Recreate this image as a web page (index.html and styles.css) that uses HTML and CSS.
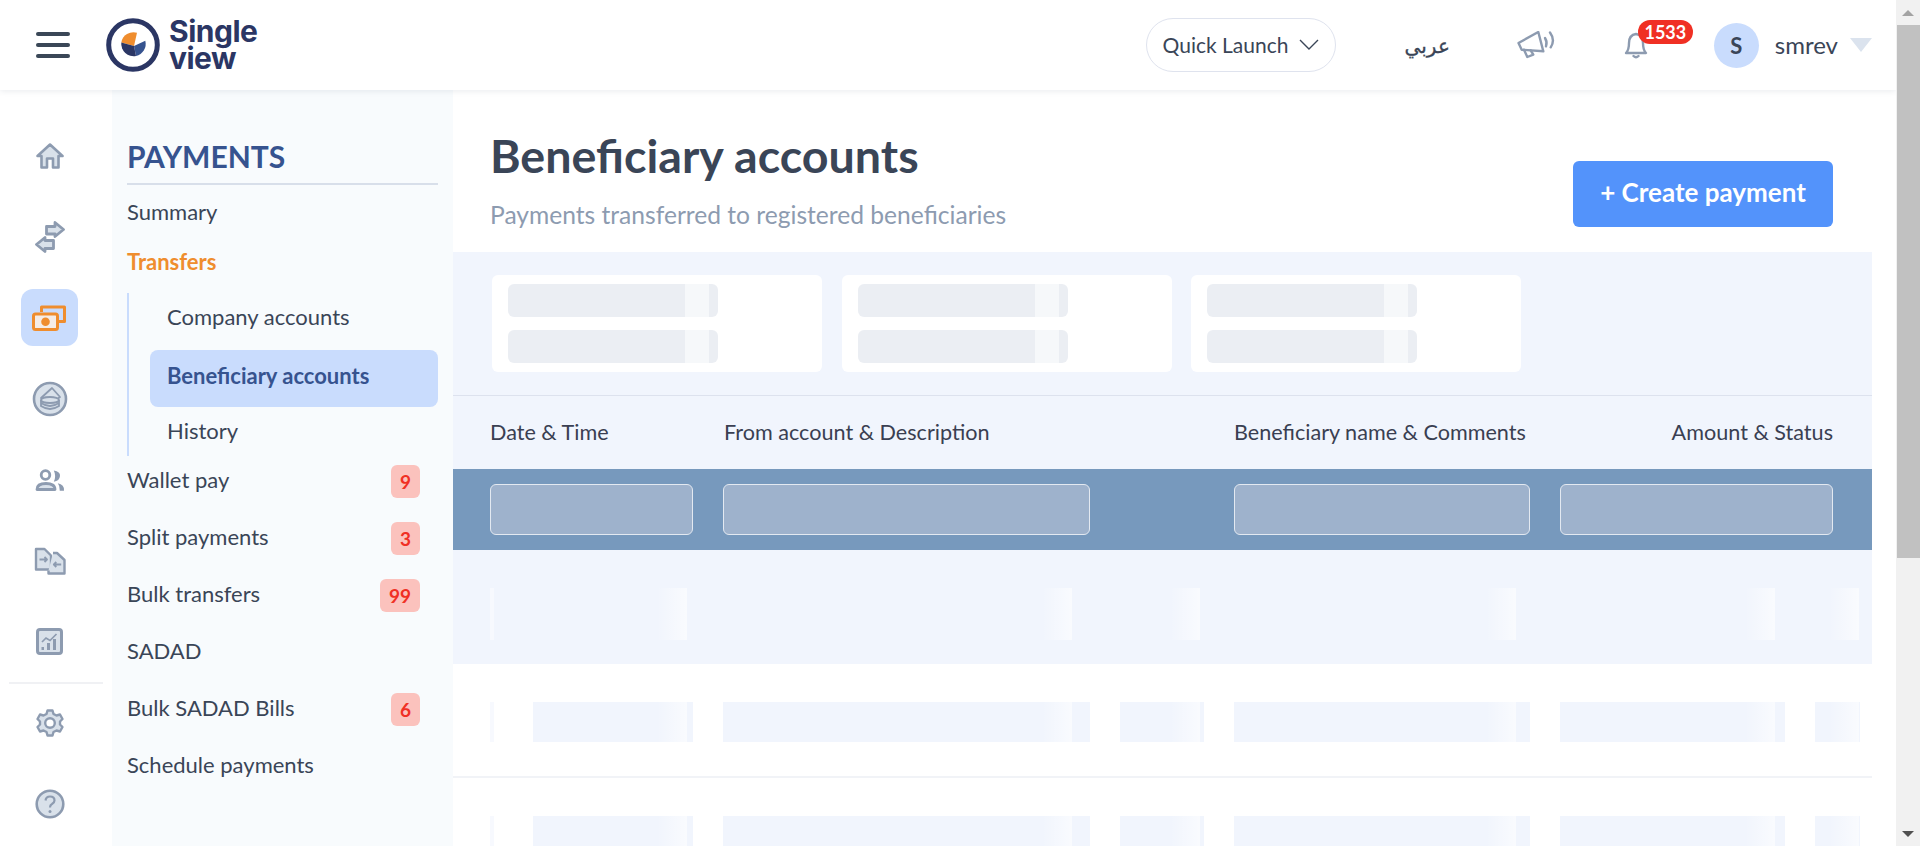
FILE: index.html
```html
<!DOCTYPE html>
<html lang="en">
<head>
  <meta charset="UTF-8" />
  <meta name="viewport" content="width=device-width, initial-scale=1.0"/>
  <title>Beneficiary accounts</title>
  <link rel="stylesheet" href="styles.css">
</head>
<body>

  <div class="page">
    <header class="topbar">
      <div class="burger"><span></span><span></span><span></span></div>
      <div class="logo">
        <svg width="54" height="54" viewBox="0 0 54 54">
          <circle cx="27" cy="27" r="24.300" fill="none" stroke="#2b3664" stroke-width="5"/>
          <path d="M15.300 24.500 A12.500 12.500 0 0 1 31 14.700 L28 28 Z" fill="#ef8d2e"/>
          <path d="M28 28 L39.300 22.700 A12.500 12.500 0 0 1 30 38 Z" fill="#36538f"/>
          <path d="M15.300 24.500 L28 28 L30 38 A12.500 12.500 0 0 1 15.300 24.500 Z" fill="#2b3664"/>
        </svg>
        <div class="logo-text">Single<br>view</div>
      </div>

      <div class="top-right">
        <button class="quick">Quick Launch
          <svg width="20" height="11" viewBox="0 0 20 11"><path d="M1 1 L10 10 L19 1" fill="none" stroke="#3a4557" stroke-width="1.400"/></svg>
        </button>
        <span class="lang" lang="ar">عربي</span>
        <svg class="megaphone" width="38" height="28" viewBox="0 0 38 28" fill="none" stroke="#8d9bb0" stroke-width="2.400" stroke-linejoin="round" stroke-linecap="round">
          <path d="M1.500 12 L21.300 1 L26.300 20.300 L4.700 18.700 Z"/>
          <path d="M7 18.700 L10.300 26 L16.300 23.700 L13.700 19.300"/>
          <path d="M28 7 Q30.500 11 29 15.300"/>
          <path d="M33 1.500 Q38.500 9 33.700 16.300"/>
        </svg>
        <div class="bell-wrap">
          <svg width="24" height="28" viewBox="0 0 24 28" fill="none" stroke="#8d9bb0" stroke-width="2.400" stroke-linejoin="round" stroke-linecap="round">
            <path d="M2 22 Q5 19 5 12 Q5 4 12 3 Q19 4 19 12 Q19 19 22 22 Z"/>
            <path d="M9.500 25 Q12 27.500 14.500 25"/>
          </svg>
          <span class="count">1533</span>
        </div>
        <div class="avatar">S</div>
        <span class="username">smrev</span>
        <span class="caret"></span>
      </div>
    </header>

    <div class="shell">
      <nav class="rail">
        <a class="rail-item">
          <svg width="28" height="26" viewBox="0 0 28 26"><path d="M14 1.500 L26.500 13 H22.500 V24.500 H17 V15.500 H11 V24.500 H5.500 V13 H1.500 Z" fill="#d9e1ea" stroke="#8d9bb0" stroke-width="2.600" stroke-linejoin="round"/></svg>
        </a>
        <a class="rail-item">
          <svg width="30" height="32" viewBox="0 0 30 32" fill="#d9e1ea" stroke="#8d9bb0" stroke-width="2.800" stroke-linejoin="round"><path d="M11.500 5.500 H20 V1.500 L28.500 8.500 L20 15.500 V13 H11.500 Z"/><path d="M1.500 23.500 L10 16.500 V19.500 H18.500 V27.500 H10 V30.500 Z"/></svg>
        </a>
        <a class="rail-item active">
          <svg width="35" height="26" viewBox="0 0 35 26" fill="none" stroke="#ef8d2e" stroke-width="3" stroke-linejoin="round"><path d="M9.500 7 V2 H32.500 V16.500 H27"/><rect x="1.500" y="9" width="24" height="15.500" rx="2" fill="#f5ece6"/><circle cx="13.500" cy="16.700" r="4.300" fill="#ef8d2e" stroke="none"/></svg>
        </a>
        <a class="rail-item">
          <svg width="36" height="36" viewBox="0 0 36 36"><circle cx="18" cy="18" r="16" fill="#d9e1ea" stroke="#8d9bb0" stroke-width="2.600"/><path d="M9 17 L20 7 L28 16 L21 21 Z" fill="#d9e1ea" stroke="#8d9bb0" stroke-width="1.800" stroke-linejoin="round"/><ellipse cx="18" cy="19" rx="9" ry="3" fill="#d9e1ea" stroke="#8d9bb0" stroke-width="1.800"/><path d="M9 19 V25 Q18 31 27 25 V19 M9 22 Q18 28 27 22" fill="none" stroke="#8d9bb0" stroke-width="1.800"/></svg>
        </a>
        <a class="rail-item">
          <svg width="30" height="24" viewBox="0 0 30 24"><circle cx="10.500" cy="7" r="4.300" fill="#fff" stroke="#8d9bb0" stroke-width="2.800"/><path d="M2 21.500 Q2 15.500 11 15.500 Q20 15.500 20 21.500 Z" fill="#d9e1ea" stroke="#8d9bb0" stroke-width="2.800" stroke-linejoin="round"/><path d="M18.800 2.500 Q25.500 3.500 25 8 Q24.500 13 18.800 13.700 Q21.500 8 18.800 2.500 Z" fill="#8d9bb0"/><path d="M22.800 15.300 Q29.500 16.500 29 22.700 H24.800 Q25 18 22.800 15.300 Z" fill="#8d9bb0"/></svg>
        </a>
        <a class="rail-item">
          <svg width="32" height="28" viewBox="0 0 32 28" fill="none" stroke="#8d9bb0" stroke-width="2.400" stroke-linejoin="round"><path d="M2 2 H10.500 L17 8.500 V22.500 H2 Z" fill="#d9e1ea"/><path d="M19 6 H23 L30.500 13 V26.500 H14.500 V23.500" fill="#d9e1ea"/><path d="M5.500 12.500 H13 M10.500 10 L13 12.500 L10.500 15 M27.200 17.500 H19.800 M22.300 15 L19.800 17.500 L22.300 20" stroke-width="1.800"/></svg>
        </a>
        <a class="rail-item">
          <svg width="27" height="27" viewBox="0 0 27 27"><rect x="1.500" y="1.500" width="24" height="24" rx="2.500" fill="#d9e1ea" stroke="#8d9bb0" stroke-width="3"/><path d="M6 14 L10 10 L14 12.500 L20.500 6" fill="none" stroke="#8d9bb0" stroke-width="1.700"/><path d="M5.500 19 H8 V22 H5.500 Z M11 15 H14 V22 H11 Z M17 11 H20 V22 H17 Z" fill="#8d9bb0"/></svg>
        </a>
        <div class="rail-sep"></div>
        <a class="rail-item">
          <svg width="28" height="28" viewBox="0 0 28 28"><path d="M11.500 1.500 H16.500 L17.500 5 L20.500 6.500 L24 5.500 L26.500 10 L24 12.500 V15.500 L26.500 18 L24 22.500 L20.500 21.500 L17.500 23 L16.500 26.500 H11.500 L10.500 23 L7.500 21.500 L4 22.500 L1.500 18 L4 15.500 V12.500 L1.500 10 L4 5.500 L7.500 6.500 L10.500 5 Z" fill="#d9e1ea" stroke="#8d9bb0" stroke-width="2.400" stroke-linejoin="round"/><circle cx="14" cy="14" r="4.800" fill="#fff" stroke="#8d9bb0" stroke-width="2.400"/></svg>
        </a>
        <a class="rail-item">
          <svg width="30" height="30" viewBox="0 0 30 30"><circle cx="15" cy="15" r="13.300" fill="#d9e1ea" stroke="#8d9bb0" stroke-width="2.600"/><path d="M10.500 11.500 Q11 7.500 15 7.500 Q19.500 7.500 19.500 11.500 Q19.500 13.500 17 15 Q15 16 15 18.500" fill="none" stroke="#8d9bb0" stroke-width="2.200"/><circle cx="15" cy="22.500" r="1.500" fill="#8d9bb0"/></svg>
        </a>
      </nav>

      <aside class="panel">
        <h2 class="panel-title">PAYMENTS</h2>
        <a class="menu-item">Summary</a>
        <a class="menu-item current">Transfers</a>
        <div class="submenu">
          <a class="sub-item">Company accounts</a>
          <a class="sub-item selected">Beneficiary accounts</a>
          <a class="sub-item">History</a>
        </div>
        <a class="menu-item">Wallet pay <span class="tag">9</span></a>
        <a class="menu-item">Split payments <span class="tag">3</span></a>
        <a class="menu-item">Bulk transfers <span class="tag">99</span></a>
        <a class="menu-item">SADAD</a>
        <a class="menu-item">Bulk SADAD Bills <span class="tag">6</span></a>
        <a class="menu-item">Schedule payments</a>
      </aside>

      <main class="main">
        <div class="head">
          <div>
            <h1>Beneficiary accounts</h1>
            <p>Payments transferred to registered beneficiaries</p>
          </div>
          <button class="create">+ Create payment</button>
        </div>

        <div class="cards">
          <div class="card"><div class="skel"></div><div class="skel"></div></div>
          <div class="card"><div class="skel"></div><div class="skel"></div></div>
          <div class="card"><div class="skel"></div><div class="skel"></div></div>
        </div>

        <div class="table-head">
          <span class="col-date">Date &amp; Time</span>
          <span class="col-from">From account &amp; Description</span>
          <span class="col-name">Beneficiary name &amp; Comments</span>
          <span class="col-amount">Amount &amp; Status</span>
        </div>

        <div class="filters">
          <div class="filter f-date"></div>
          <div class="filter f-from"></div>
          <div class="filter f-name"></div>
          <div class="filter f-amount"></div>
        </div>

        <div class="row row-first">
          <i class="bar b-thin"></i><i class="bar b-a"></i><i class="bar b-b"></i><i class="bar b-c"></i><i class="bar b-d"></i><i class="bar b-e"></i><i class="bar b-f"></i>
        </div>
        <div class="row">
          <i class="bar b-thin"></i><i class="bar b-a"></i><i class="bar b-b"></i><i class="bar b-c"></i><i class="bar b-d"></i><i class="bar b-e"></i><i class="bar b-f"></i>
        </div>
        <div class="row">
          <i class="bar b-thin"></i><i class="bar b-a"></i><i class="bar b-b"></i><i class="bar b-c"></i><i class="bar b-d"></i><i class="bar b-e"></i><i class="bar b-f"></i>
        </div>
      </main>
    </div>
  </div>

  <div class="scrollbar">
    <div class="arrow-up"></div>
    <div class="thumb"></div>
    <div class="arrow-down"></div>
  </div>

</body>
</html>
```

FILE: styles.css
```css
* {
  box-sizing: border-box;
}
body {
  margin: 0;
  height: 846px;
  overflow: hidden;
  display: flex;
  background: #fff;
  font-family: Lato, "Noto Sans", sans-serif;
  color: #3a4557;
}
.page {
  width: 1896px;
  height: 846px;
  overflow: hidden;
}

/* top bar */
.topbar {
  height: 90px;
  display: flex;
  align-items: center;
  padding-left: 36px;
  background: #fff;
  box-shadow: 0 1px 6px rgba(40, 60, 90, 0.1);
  position: relative;
}
.burger {
  width: 34px;
  display: flex;
  flex-direction: column;
  gap: 7px;
}
.burger span {
  height: 4px;
  background: #3a4757;
  border-radius: 2px;
}
.logo {
  margin-left: 36px;
  display: flex;
  align-items: center;
  gap: 9px;
}
.logo-text {
  font-family: Inter, sans-serif;
  font-size: 30px;
  font-weight: 700;
  line-height: 27px;
  letter-spacing: -0.5px;
  color: #2b3664;
}
.top-right {
  margin-left: auto;
  display: flex;
  align-items: center;
}
.quick {
  width: 190px;
  height: 54px;
  padding: 0 16px 2px;
  display: flex;
  align-items: center;
  justify-content: space-between;
  background: #fff;
  border: 1px solid #dfe3ee;
  border-radius: 27px;
  font: 21px Lato, sans-serif;
  color: #3a4557;
}
.lang {
  margin-left: 69px;
  font: 20px "Noto Sans", "DejaVu Sans", sans-serif;
  -webkit-text-stroke: 0.3px #3a4557;
  color: #3a4557;
}
.megaphone {
  margin-left: 67px;
}
.bell-wrap {
  margin-left: 69px;
  width: 69px;
  height: 54px;
  display: flex;
  align-items: center;
  position: relative;
}
.count {
  position: absolute;
  left: 14px;
  top: 2px;
  width: 55px;
  height: 24px;
  background: #f03024;
  border-radius: 12px;
  color: #fff;
  font-size: 18px;
  font-weight: 700;
  line-height: 24px;
  text-align: center;
}
.avatar {
  margin-left: 21px;
  width: 45px;
  height: 45px;
  border-radius: 50%;
  background: #c9dcfd;
  text-align: center;
  font-size: 22px;
  font-weight: 700;
  line-height: 45px;
}
.username {
  margin-left: 16px;
  padding-bottom: 2px;
  font-size: 24px;
}
.caret {
  margin-left: 12px;
  margin-right: 24px;
  border-left: 11px solid transparent;
  border-right: 11px solid transparent;
  border-top: 14px solid #dbe3ee;
}

/* left columns */
.shell {
  display: flex;
  height: 756px;
}
.rail {
  width: 112px;
  padding-top: 37px;
  display: flex;
  flex-direction: column;
  align-items: flex-start;
}
.rail-item {
  width: 57px;
  height: 57px;
  margin: 0 0 24px 21px;
  flex-shrink: 0;
  display: flex;
  align-items: center;
  justify-content: center;
  border-radius: 12px;
}
.rail-item.active {
  background: #c9dcfd;
}
.rail-sep {
  width: 94px;
  height: 2px;
  flex-shrink: 0;
  margin: -12px 0 10px 9px;
  background: #f0f1f4;
}
.panel {
  width: 341px;
  padding: 0 15px 0 15px;
  background: #f8fbfd;
}
.panel-title {
  margin: 48px 0 0;
  padding-bottom: 9px;
  border-bottom: 2px solid #d8dfea;
  font-size: 30px;
  font-weight: 700;
  line-height: 36px;
  color: #36538f;
}
.menu-item {
  height: 57px;
  display: flex;
  align-items: center;
  justify-content: space-between;
  padding-right: 18px;
  padding-bottom: 4px;
  font-size: 22px;
}
.menu-item.current {
  height: 40px;
  padding-bottom: 2px;
  font-weight: 700;
  color: #ef8d2e;
}
.submenu {
  margin: 11px 0 -3px;
  height: 163px;
  padding-left: 21px;
  border-left: 2px solid #c9dcfd;
}
.sub-item {
  display: block;
  height: 57px;
  padding-left: 17px;
  font-size: 22px;
  line-height: 48px;
}
.sub-item.selected {
  background: #c9dcfd;
  border-radius: 8px;
  font-weight: 700;
  line-height: 52px;
  color: #36538f;
}
.tag {
  min-width: 29px;
  height: 33px;
  margin-bottom: -4px;
  padding: 0 9px;
  background: #fbc2bd;
  border-radius: 6px;
  color: #f03024;
  font-size: 19px;
  font-weight: 700;
  line-height: 33px;
  text-align: center;
}

/* main */
.main {
  width: 1419px;
}
.head {
  height: 162px;
  padding: 37px 39px 0 37px;
  display: flex;
  justify-content: space-between;
}
.head h1 {
  margin: 0;
  font-size: 46.600px;
  font-weight: 700;
  line-height: 56px;
  color: #3a4557;
}
.head p {
  margin: 17px 0 0;
  font-size: 24.600px;
  color: #8d9bb0;
}
.create {
  width: 260px;
  height: 66px;
  margin-top: 34px;
  padding-bottom: 5px;
  background: #5393fb;
  border: none;
  border-radius: 6px;
  color: #fff;
  font: 700 26px Lato, sans-serif;
}
.cards {
  height: 143px;
  padding: 23px 39px;
  display: flex;
  gap: 19.500px;
  background: #f1f5fd;
}
.card {
  width: 330px;
  height: 97px;
  padding: 9px 16px;
  background: #fff;
  border-radius: 6px;
}
.skel {
  width: 210px;
  height: 33px;
  margin-bottom: 13px;
  border-radius: 6px;
  background: linear-gradient(90deg, #ebeef3 177px, #f6f8fa 177px, #f6f8fa 201px, #ebeef3 201px);
}
.table-head {
  height: 74px;
  padding: 0 39px 2px 37px;
  display: flex;
  align-items: center;
  background: #f1f5fd;
  border-top: 1px solid #dde2ee;
  font-size: 21.600px;
  color: #3a3f52;
}
.col-date {
  width: 234px;
}
.col-from {
  width: 510px;
}
.col-amount {
  margin-left: auto;
}
.filters {
  height: 81px;
  padding: 15px 39px 0 37px;
  display: flex;
  background: #7799bd;
}
.filter {
  height: 51px;
  background: #9eb2cc;
  border: 1px solid #e3e9f1;
  border-radius: 6px;
}
.f-date {
  width: 203px;
  margin-right: 30px;
}
.f-from {
  width: 367px;
  margin-right: 144px;
}
.f-name {
  width: 296px;
  margin-right: 30px;
}
.f-amount {
  width: 273px;
}

/* skeleton rows */
.row {
  height: 114px;
  padding: 38px 0 0 37px;
  display: flex;
  border-bottom: 2px solid #f1f3f7;
  position: relative;
}
.row::after {
  content: "";
  position: absolute;
  top: 38px;
  left: 0;
  right: 0;
  height: 40px;
  background-image:
    linear-gradient(90deg, rgba(255,255,255,0), rgba(255,255,255,0.6)),
    linear-gradient(90deg, rgba(255,255,255,0), rgba(255,255,255,0.6)),
    linear-gradient(90deg, rgba(255,255,255,0), rgba(255,255,255,0.6)),
    linear-gradient(90deg, rgba(255,255,255,0), rgba(255,255,255,0.6)),
    linear-gradient(90deg, rgba(255,255,255,0), rgba(255,255,255,0.6)),
    linear-gradient(90deg, rgba(255,255,255,0), rgba(255,255,255,0.6));
  background-repeat: no-repeat;
  background-size: 30px 100%;
  background-position: 204px 0, 589px 0, 717px 0, 1033px 0, 1292px 0, 1376px 0;
}
.row-first {
  background: #f1f5fd;
  border-bottom: none;
}
.row-first::after {
  height: 52px;
}
.bar {
  display: block;
  height: 40px;
  background: #f1f5fd;
}
.row-first .bar {
  height: 52px;
}
.b-thin {
  width: 4px;
  margin-right: 39px;
  background: #f7f9fe;
}
.b-a {
  width: 160px;
  margin-right: 30px;
}
.b-b {
  width: 367px;
  margin-right: 30px;
}
.b-c {
  width: 84px;
  margin-right: 30px;
}
.b-d {
  width: 296px;
  margin-right: 30px;
}
.b-e {
  width: 225px;
  margin-right: 30px;
}
.b-f {
  width: 45px;
}

/* browser scrollbar */
.scrollbar {
  width: 24px;
  height: 846px;
  display: flex;
  flex-direction: column;
  background: #f1f1f1;
}
.arrow-up {
  height: 25px;
  padding-top: 10px;
  background: #f1f1f1;
}
.arrow-up::before {
  content: "";
  display: block;
  width: 0;
  margin: 0 auto;
  border-left: 6px solid transparent;
  border-right: 6px solid transparent;
  border-bottom: 6px solid #a3a3a3;
}
.thumb {
  height: 533px;
  margin-left: 1px;
  background: #c1c1c1;
}
.arrow-down {
  margin-top: auto;
  height: 25px;
  padding-top: 10px;
}
.arrow-down::before {
  content: "";
  display: block;
  width: 0;
  margin: 0 auto;
  border-left: 6px solid transparent;
  border-right: 6px solid transparent;
  border-top: 6px solid #505050;
}
```
